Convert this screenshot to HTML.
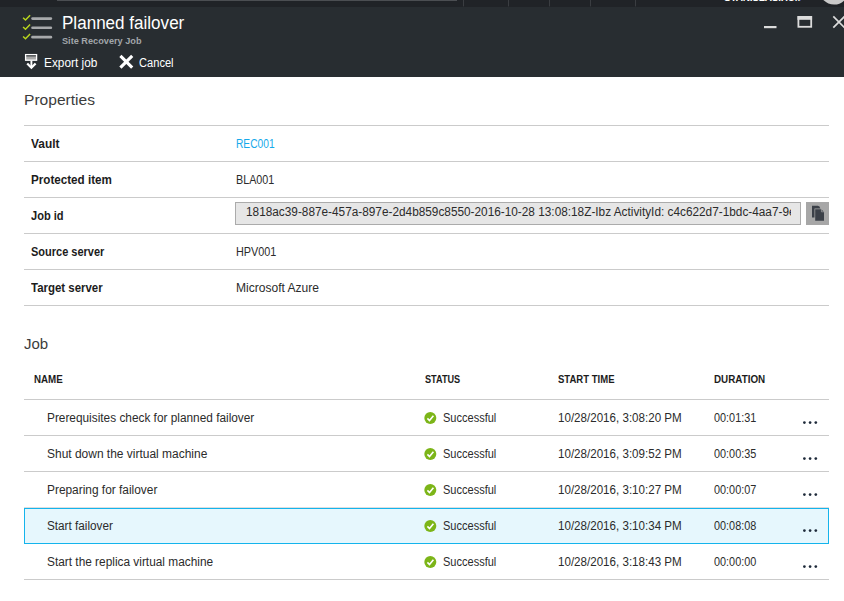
<!DOCTYPE html>
<html><head><meta charset="utf-8"><title>Planned failover</title>
<style>
*{box-sizing:border-box;margin:0;padding:0}
html,body{width:844px;height:601px;overflow:hidden;background:#fff;font-family:'Liberation Sans',sans-serif;color:#2b2b2b}
.a{position:absolute}
.t{position:absolute;white-space:pre;line-height:1;transform-origin:0 0}
.ln{position:absolute;left:24px;width:805px;height:1px;background:#cbcbcb}
</style></head><body>
<div class="a" style="left:0;top:0;width:844px;height:7px;background:#202327"></div>
<div class="a" style="left:57px;top:0;width:400px;height:1px;background:#4b4e52"></div>
<div class="a" style="left:0;top:7px;width:844px;height:70px;background:#282d31"></div>
<svg class="a" style="left:0;top:0" width="844" height="77" viewBox="0 0 844 77">
 <!-- checklist icon -->
 <g fill="none" stroke="#b9d71c" stroke-width="1.45">
  <path d="M23.1 17.7 L25.5 20.0 L30.1 15.2"/>
  <path d="M23.1 27.0 L25.5 29.3 L30.1 24.5"/>
  <path d="M23.1 36.4 L25.5 38.7 L30.1 33.9"/>
 </g>
 <g fill="#a7a9ab">
  <rect x="31.2" y="17.2" width="21" height="2.7" rx="1.3"/>
  <rect x="31.2" y="26.4" width="21" height="2.7" rx="1.3"/>
  <rect x="31.2" y="35.8" width="21" height="2.7" rx="1.3"/>
 </g>
 <!-- export icon -->
 <rect x="25.6" y="54.6" width="11" height="5.6" fill="#a9a9a9" stroke="#fff" stroke-width="1.3"/>
 <rect x="26.3" y="55.3" width="9.6" height="1.1" fill="#33373b"/>
 <path d="M31.4 60.6 V67.6" stroke="#fff" stroke-width="1.9" fill="none"/>
 <path d="M27.2 63.5 L31.4 67.7 L35.6 63.5" stroke="#fff" stroke-width="2.3" fill="none"/>
 <!-- cancel X -->
 <path d="M120.4 55.8 L132.2 67.6 M132.2 55.8 L120.4 67.6" stroke="#fff" stroke-width="3.1" fill="none"/>
 <!-- window controls -->
 <rect x="764" y="26" width="12.5" height="2.2" fill="#dcdcdc"/>
 <rect x="798.4" y="17" width="12.8" height="9.8" fill="none" stroke="#dcdcdc" stroke-width="1.8"/>
 <rect x="797.5" y="16" width="14.6" height="3.8" fill="#dcdcdc"/>
 <path d="M833.3 16.4 L844.6 27.7 M844.6 16.4 L833.3 27.7" stroke="#dcdcdc" stroke-width="1.7" fill="none"/>
 <!-- top strip -->
 <circle cx="834" cy="-10" r="14.6" fill="#c9c9c9"/>
 <g fill="#3a3d41"><rect x="463" y="0" width="1" height="6.4"/><rect x="508" y="0" width="1" height="6.4"/><rect x="549" y="0" width="1" height="6.4"/><rect x="590" y="0" width="1" height="6.4"/><rect x="635" y="0" width="1" height="6.4"/></g>
</svg>
<div class="a" style="left:724px;top:-6.8px;width:77px;height:10px;overflow:hidden;font-size:10px;font-weight:bold;color:#fff;white-space:pre;line-height:1;letter-spacing:-0.2px">STANISLAS.HUM</div>

<div class="ln" style="top:125px"></div>
<div class="ln" style="top:161px"></div>
<div class="ln" style="top:197px"></div>
<div class="ln" style="top:233px"></div>
<div class="ln" style="top:269px"></div>
<div class="ln" style="top:305px"></div>
<div class="ln" style="top:399px"></div>
<div class="ln" style="top:435px"></div>
<div class="ln" style="top:471px"></div>
<div class="ln" style="top:507px;background:#dedede"></div>
<div class="ln" style="top:579px"></div>
<div class="a" style="left:235px;top:202px;width:566px;height:23px;background:#e6e6e6;border:1px solid #ababab"></div>
<div class="a" style="left:245.8px;top:203px;width:545.5px;height:21px;overflow:hidden"><div class="t" style="left:0;top:3.4px;font-size:12.5px;color:#2b2b2b;transform:scaleX(0.9448)">1818ac39-887e-457a-897e-2d4b859c8550-2016-10-28 13:08:18Z-Ibz ActivityId: c4c622d7-1bdc-4aa7-9e</div></div>
<div class="a" style="left:806px;top:202px;width:23px;height:23px;background:#a7a7a7"></div>
<svg class="a" style="left:806px;top:202px" width="23" height="23" viewBox="806 202 23 23">
 <path d="M812 205.8 H817.8 Q820 206.2 820.3 208.4 V217.4 H812 Z" fill="#3b4048"/>
 <path d="M814.5 208.5 H821.8 L824.7 211.4 V221.5 H814.5 Z" fill="#a7a7a7"/>
 <path d="M815.2 209.2 H821.3 L824 211.9 V220.8 H815.2 Z" fill="#3b4048"/>
 <path d="M821.4 209 V211.8 H824.2" fill="none" stroke="#a7a7a7" stroke-width="0.7"/>
</svg>
<div class="a" style="left:24px;top:508px;width:805px;height:36px;background:#e6f7fd;border:1px solid #14b4ec"></div>
<svg class="a" style="left:0;top:400px" width="844" height="180" viewBox="0 400 844 180">
<circle cx="430.3" cy="418.1" r="6" fill="#7cb518"/><path d="M427.4 418.4 L429.5 420.5 L433.4 415.8" fill="none" stroke="#fff" stroke-width="1.6"/><circle cx="804.4" cy="422.6" r="1.35" fill="#1e2a3a"/><circle cx="810.1" cy="422.6" r="1.35" fill="#1e2a3a"/><circle cx="815.8" cy="422.6" r="1.35" fill="#1e2a3a"/>
<circle cx="430.3" cy="454.1" r="6" fill="#7cb518"/><path d="M427.4 454.4 L429.5 456.5 L433.4 451.8" fill="none" stroke="#fff" stroke-width="1.6"/><circle cx="804.4" cy="458.6" r="1.35" fill="#1e2a3a"/><circle cx="810.1" cy="458.6" r="1.35" fill="#1e2a3a"/><circle cx="815.8" cy="458.6" r="1.35" fill="#1e2a3a"/>
<circle cx="430.3" cy="490.1" r="6" fill="#7cb518"/><path d="M427.4 490.4 L429.5 492.5 L433.4 487.8" fill="none" stroke="#fff" stroke-width="1.6"/><circle cx="804.4" cy="494.6" r="1.35" fill="#1e2a3a"/><circle cx="810.1" cy="494.6" r="1.35" fill="#1e2a3a"/><circle cx="815.8" cy="494.6" r="1.35" fill="#1e2a3a"/>
<circle cx="430.3" cy="526.1" r="6" fill="#7cb518"/><path d="M427.4 526.4 L429.5 528.5 L433.4 523.8" fill="none" stroke="#fff" stroke-width="1.6"/><circle cx="804.4" cy="530.6" r="1.35" fill="#1e2a3a"/><circle cx="810.1" cy="530.6" r="1.35" fill="#1e2a3a"/><circle cx="815.8" cy="530.6" r="1.35" fill="#1e2a3a"/>
<circle cx="430.3" cy="562.1" r="6" fill="#7cb518"/><path d="M427.4 562.4 L429.5 564.5 L433.4 559.8" fill="none" stroke="#fff" stroke-width="1.6"/><circle cx="804.4" cy="566.6" r="1.35" fill="#1e2a3a"/><circle cx="810.1" cy="566.6" r="1.35" fill="#1e2a3a"/><circle cx="815.8" cy="566.6" r="1.35" fill="#1e2a3a"/>

</svg>

<div class="t" style="left:61.7px;top:14.1px;font-size:18px;color:#ffffff;transform:scaleX(0.9474)">Planned failover</div>
<div class="t" style="left:62.4px;top:35.5px;font-size:9.5px;color:#a2a6aa;transform:scaleX(0.9651);font-weight:bold">Site Recovery Job</div>
<div class="t" style="left:44.3px;top:56.6px;font-size:12.5px;color:#ffffff;transform:scaleX(0.9470)">Export job</div>
<div class="t" style="left:139.3px;top:56.6px;font-size:12.5px;color:#ffffff;transform:scaleX(0.8890)">Cancel</div>
<div class="t" style="left:24.0px;top:91.5px;font-size:15.5px;color:#3c3c3c;transform:scaleX(1.0049)">Properties</div>
<div class="t" style="left:24.0px;top:335.9px;font-size:15.5px;color:#3c3c3c;transform:scaleX(0.9680)">Job</div>
<div class="t" style="left:31.0px;top:137.6px;font-size:12px;color:#1c1c1c;transform:scaleX(0.9935);font-weight:bold">Vault</div>
<div class="t" style="left:31.0px;top:173.6px;font-size:12px;color:#1c1c1c;transform:scaleX(0.9705);font-weight:bold">Protected item</div>
<div class="t" style="left:31.0px;top:209.6px;font-size:12px;color:#1c1c1c;transform:scaleX(0.9224);font-weight:bold">Job id</div>
<div class="t" style="left:31.0px;top:245.6px;font-size:12px;color:#1c1c1c;transform:scaleX(0.9168);font-weight:bold">Source server</div>
<div class="t" style="left:31.0px;top:281.6px;font-size:12px;color:#1c1c1c;transform:scaleX(0.9540);font-weight:bold">Target server</div>
<div class="t" style="left:236.1px;top:137.6px;font-size:12px;color:#16a9ea;transform:scaleX(0.8510)">REC001</div>
<div class="t" style="left:236.1px;top:173.6px;font-size:12px;color:#2b2b2b;transform:scaleX(0.8969)">BLA001</div>
<div class="t" style="left:236.1px;top:245.6px;font-size:12px;color:#2b2b2b;transform:scaleX(0.9037)">HPV001</div>
<div class="t" style="left:236.1px;top:281.6px;font-size:12px;color:#2b2b2b;transform:scaleX(1.0036)">Microsoft Azure</div>
<div class="t" style="left:34.4px;top:374.7px;font-size:10px;color:#1c1c1c;transform:scaleX(0.9778);font-weight:bold">NAME</div>
<div class="t" style="left:424.8px;top:374.7px;font-size:10px;color:#1c1c1c;transform:scaleX(0.9139);font-weight:bold">STATUS</div>
<div class="t" style="left:557.5px;top:374.7px;font-size:10px;color:#1c1c1c;transform:scaleX(0.9533);font-weight:bold">START TIME</div>
<div class="t" style="left:713.9px;top:374.7px;font-size:10px;color:#1c1c1c;transform:scaleX(0.9840);font-weight:bold">DURATION</div>
<div class="t" style="left:47.3px;top:411.7px;font-size:12px;color:#2b2b2b;transform:scaleX(0.9866)">Prerequisites check for planned failover</div>
<div class="t" style="left:442.9px;top:411.7px;font-size:12px;color:#2b2b2b;transform:scaleX(0.9185)">Successful</div>
<div class="t" style="left:557.5px;top:411.7px;font-size:12px;color:#2b2b2b;transform:scaleX(0.9656)">10/28/2016, 3:08:20 PM</div>
<div class="t" style="left:713.9px;top:411.7px;font-size:12px;color:#2b2b2b;transform:scaleX(0.9054)">00:01:31</div>
<div class="t" style="left:47.3px;top:447.7px;font-size:12px;color:#2b2b2b;transform:scaleX(0.9971)">Shut down the virtual machine</div>
<div class="t" style="left:442.9px;top:447.7px;font-size:12px;color:#2b2b2b;transform:scaleX(0.9185)">Successful</div>
<div class="t" style="left:557.5px;top:447.7px;font-size:12px;color:#2b2b2b;transform:scaleX(0.9656)">10/28/2016, 3:09:52 PM</div>
<div class="t" style="left:713.9px;top:447.7px;font-size:12px;color:#2b2b2b;transform:scaleX(0.9054)">00:00:35</div>
<div class="t" style="left:47.3px;top:483.7px;font-size:12px;color:#2b2b2b;transform:scaleX(0.9911)">Preparing for failover</div>
<div class="t" style="left:442.9px;top:483.7px;font-size:12px;color:#2b2b2b;transform:scaleX(0.9185)">Successful</div>
<div class="t" style="left:557.5px;top:483.7px;font-size:12px;color:#2b2b2b;transform:scaleX(0.9656)">10/28/2016, 3:10:27 PM</div>
<div class="t" style="left:713.9px;top:483.7px;font-size:12px;color:#2b2b2b;transform:scaleX(0.9054)">00:00:07</div>
<div class="t" style="left:47.3px;top:519.7px;font-size:12px;color:#2b2b2b;transform:scaleX(0.9783)">Start failover</div>
<div class="t" style="left:442.9px;top:519.7px;font-size:12px;color:#2b2b2b;transform:scaleX(0.9185)">Successful</div>
<div class="t" style="left:557.5px;top:519.7px;font-size:12px;color:#2b2b2b;transform:scaleX(0.9656)">10/28/2016, 3:10:34 PM</div>
<div class="t" style="left:713.9px;top:519.7px;font-size:12px;color:#2b2b2b;transform:scaleX(0.9054)">00:08:08</div>
<div class="t" style="left:47.3px;top:555.7px;font-size:12px;color:#2b2b2b;transform:scaleX(0.9882)">Start the replica virtual machine</div>
<div class="t" style="left:442.9px;top:555.7px;font-size:12px;color:#2b2b2b;transform:scaleX(0.9185)">Successful</div>
<div class="t" style="left:557.5px;top:555.7px;font-size:12px;color:#2b2b2b;transform:scaleX(0.9656)">10/28/2016, 3:18:43 PM</div>
<div class="t" style="left:713.9px;top:555.7px;font-size:12px;color:#2b2b2b;transform:scaleX(0.9054)">00:00:00</div>
</body></html>
